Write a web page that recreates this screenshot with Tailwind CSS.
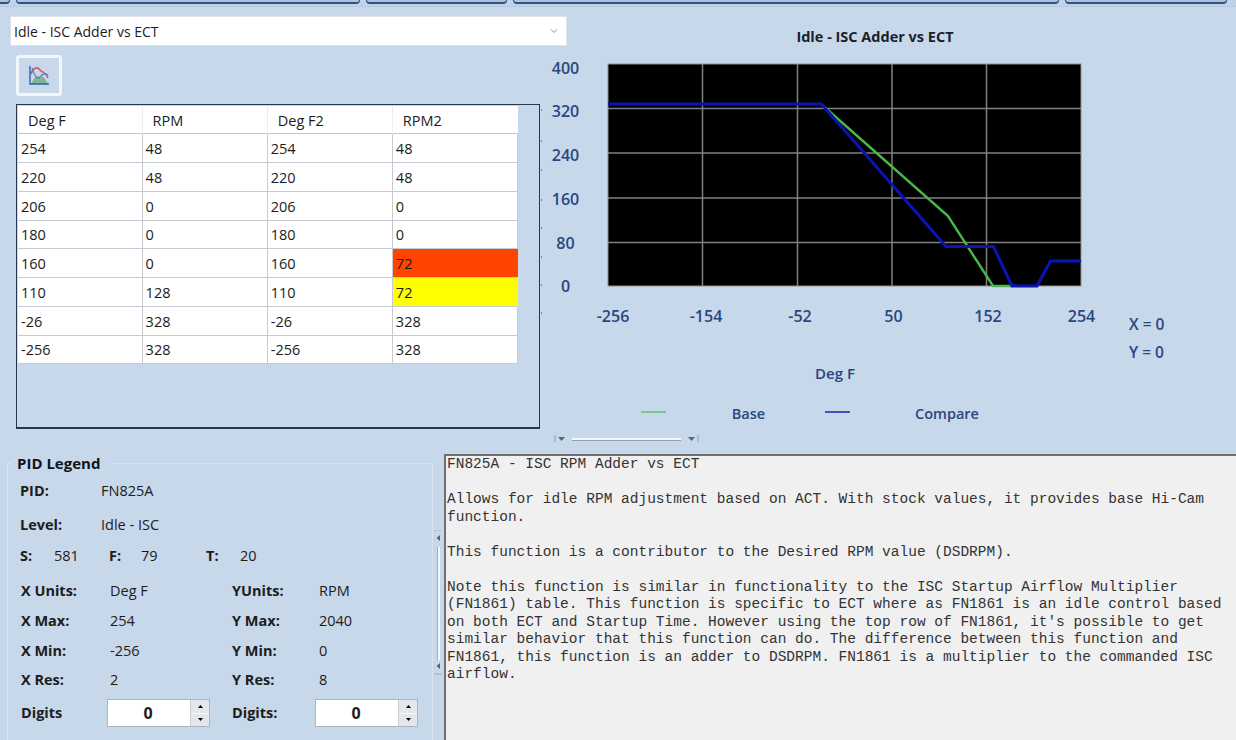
<!DOCTYPE html>
<html lang="en">
<head>
    <meta charset="UTF-8">
    <title>Idle - ISC Adder vs ECT</title>
    <script src="https://cdn.jsdelivr.net/npm/@tailwindcss/browser@4"></script>
</head>
<body class="bg-[#c7d8eb]">
<div class="w-[1236px] h-[740px] overflow-hidden flex flex-col bg-[#c7d8eb] text-[14.5px] text-[#1c1c1c] font-['Open_Sans',sans-serif]">

    <!-- Tab strip, cut off at the top -->
    <div class="h-[7px] flex gap-[6px] border-b border-[#b7c9e2] bg-[#bfd2e8]">
        <div class="w-[10px] h-[4px] bg-[#a9c3e3] border-b-2 border-r border-[#33527f] rounded-br-sm"></div>
        <div class="w-[344px] h-[4px] bg-[#a9c3e3] border-b-2 border-x border-[#33527f] rounded-b-sm"></div>
        <div class="w-[141px] h-[4px] bg-[#a9c3e3] border-b-2 border-x border-[#33527f] rounded-b-sm"></div>
        <div class="w-[546px] h-[4px] bg-[#a9c3e3] border-b-2 border-x border-[#33527f] rounded-b-sm"></div>
        <div class="w-[162px] h-[4px] bg-[#a9c3e3] border-b-2 border-x border-[#33527f] rounded-b-sm"></div>
    </div>

    <!-- Combo box + chart title -->
    <div class="flex h-[39px] pt-[9px]">
        <div class="ml-[10px] w-[557px] h-[30px] bg-white border border-[#dde3ec] flex items-center justify-between pl-[3px] pr-[8px]">
            <span class="text-[14px]">Idle - ISC Adder vs ECT</span>
            <svg width="8" height="6" viewBox="0 0 8 6"><path d="M1 1.5 L4 4.5 L7 1.5" fill="none" stroke="#8a8f96" stroke-width="1"/></svg>
        </div>
        <div class="flex-1 flex justify-center pt-[11px] pr-[53px]">
            <span class="text-[14.5px] font-bold leading-[20px] text-[#1a1f2a]">Idle - ISC Adder vs ECT</span>
        </div>
    </div>

    <!-- Table + chart -->
    <div class="flex h-[408px]">
        <div class="w-[541px] pt-[9px] pl-[16px] shrink-0">
            <button class="w-[46px] h-[41px] border-[3px] border-[#f2f6fb] rounded-[3px] flex items-center justify-center">
                <svg width="20" height="19" viewBox="0 0 20 19">
                    <path d="M2 18 L6 11 C8 9 9 10 11 12 C13 9 15 10 19 18 Z" fill="#7fb58f"/>
                    <path d="M2 8 C4 2 8 0 11 4 C14 7 17 6 19 12" fill="none" stroke="#d9555f" stroke-width="1.6"/>
                    <path d="M3 2 C5 9 8 14 11 11 C13 8 16 7 19 9" fill="none" stroke="#5a7fc4" stroke-width="1.2"/>
                    <path d="M1 0 V18 H20" fill="none" stroke="#2f62ad" stroke-width="1.4"/>
                </svg>
            </button>
            <div class="mt-[8px] w-[524px] h-[325px] border border-[#26384f] border-b-2 pt-[1px] pl-[1px]">
                <table class="table-fixed w-[500px] border-collapse bg-white">
                    <colgroup>
                        <col class="w-[124px]"><col class="w-[125px]"><col class="w-[125px]"><col class="w-[125px]">
                    </colgroup>
                    <thead class="[&_th]:pt-[3px]">
                        <tr class="h-[27px] border-b border-[#bfc5d0]">
                            <th class="font-normal text-left pl-[10px] border-r border-[#eceef2]">Deg F</th>
                            <th class="font-normal text-left pl-[10px] border-r border-[#eceef2]">RPM</th>
                            <th class="font-normal text-left pl-[10px] border-r border-[#eceef2]">Deg F2</th>
                            <th class="font-normal text-left pl-[10px]">RPM2</th>
                        </tr>
                    </thead>
                    <tbody class="[&_td]:pt-[2px]">
                        <tr class="h-[29px] border-b border-[#c5cad3]"><td class="pl-[3px] border-r border-[#c5cad3]">254</td><td class="pl-[3px] border-r border-[#c5cad3]">48</td><td class="pl-[3px] border-r border-[#c5cad3]">254</td><td class="pl-[3px] border-r border-[#c5cad3]">48</td></tr>
                        <tr class="h-[29px] border-b border-[#c5cad3]"><td class="pl-[3px] border-r border-[#c5cad3]">220</td><td class="pl-[3px] border-r border-[#c5cad3]">48</td><td class="pl-[3px] border-r border-[#c5cad3]">220</td><td class="pl-[3px] border-r border-[#c5cad3]">48</td></tr>
                        <tr class="h-[29px] border-b border-[#c5cad3]"><td class="pl-[3px] border-r border-[#c5cad3]">206</td><td class="pl-[3px] border-r border-[#c5cad3]">0</td><td class="pl-[3px] border-r border-[#c5cad3]">206</td><td class="pl-[3px] border-r border-[#c5cad3]">0</td></tr>
                        <tr class="h-[28px] border-b border-[#c5cad3]"><td class="pl-[3px] border-r border-[#c5cad3]">180</td><td class="pl-[3px] border-r border-[#c5cad3]">0</td><td class="pl-[3px] border-r border-[#c5cad3]">180</td><td class="pl-[3px] border-r border-[#c5cad3]">0</td></tr>
                        <tr class="h-[29px] border-b border-[#c5cad3]"><td class="pl-[3px] border-r border-[#c5cad3]">160</td><td class="pl-[3px] border-r border-[#c5cad3]">0</td><td class="pl-[3px] border-r border-[#c5cad3]">160</td><td class="pl-[3px] bg-[#ff4500]">72</td></tr>
                        <tr class="h-[29px] border-b border-[#c5cad3]"><td class="pl-[3px] border-r border-[#c5cad3]">110</td><td class="pl-[3px] border-r border-[#c5cad3]">128</td><td class="pl-[3px] border-r border-[#c5cad3]">110</td><td class="pl-[3px] bg-[#ffff00]">72</td></tr>
                        <tr class="h-[29px] border-b border-[#c5cad3]"><td class="pl-[3px] border-r border-[#c5cad3]">-26</td><td class="pl-[3px] border-r border-[#c5cad3]">328</td><td class="pl-[3px] border-r border-[#c5cad3]">-26</td><td class="pl-[3px] border-r border-[#c5cad3]">328</td></tr>
                        <tr class="h-[28px] border-b border-[#c5cad3]"><td class="pl-[3px] border-r border-[#c5cad3]">-256</td><td class="pl-[3px] border-r border-[#c5cad3]">328</td><td class="pl-[3px] border-r border-[#c5cad3]">-256</td><td class="pl-[3px] border-r border-[#c5cad3]">328</td></tr>
                    </tbody>
                </table>
            </div>
        </div>

        <!-- Chart: viewBox uses page coordinates -->
        <svg class="shrink-0 font-['Open_Sans',sans-serif] font-semibold" width="695" height="408" viewBox="541 46 695 408" fill="#2a4680" font-size="16">
            <path d="M541 110 h1 M541 141 h1 M541 170 h1 M541 200 h1 M541 228 h1 M541 257 h1 M541 285 h1 M541 313 h1" stroke="#26384f" stroke-width="1"/>
            <rect x="608" y="64" width="473" height="222" fill="#000"/>
            <path d="M702.5 64 V286 M797.5 64 V286 M892 64 V286 M986.5 64 V286 M608 108.5 H1081 M608 153 H1081 M608 198 H1081 M608 242.5 H1081" stroke="#808080" stroke-width="1.5" fill="none"/>
            <rect x="608" y="64" width="473" height="222" fill="none" stroke="#8f8f8f" stroke-width="1"/>
            <path d="M821 104 L948 216 L993 286 H1012" fill="none" stroke="#49b849" stroke-width="2.4"/>
            <path d="M608 104 H821.5 L946 246.5 H993.5 L1012 286 H1037 L1050.5 261 H1081" fill="none" stroke="#0a14b4" stroke-width="3"/>
            <g text-anchor="middle">
                <text x="565.5" y="74">400</text>
                <text x="565.5" y="117">320</text>
                <text x="565.5" y="161">240</text>
                <text x="565.5" y="205">160</text>
                <text x="565.5" y="249">80</text>
                <text x="565.5" y="292">0</text>
                <text x="613" y="322">-256</text>
                <text x="706" y="322">-154</text>
                <text x="800" y="322">-52</text>
                <text x="893.5" y="322">50</text>
                <text x="988" y="322">152</text>
                <text x="1081.5" y="322">254</text>
                <text x="835" y="379" font-size="15">Deg F</text>
                <text x="748.5" y="419" font-size="14.5">Base</text>
                <text x="947" y="419" font-size="14.5">Compare</text>
            </g>
            <text x="1129" y="329.5" font-size="15.5">X = 0</text>
            <text x="1129" y="358" font-size="15.5">Y = 0</text>
            <path d="M641 412 H666" stroke="#5cc06a" stroke-width="1.5"/>
            <path d="M825 412 H850" stroke="#1a1fb0" stroke-width="1.5"/>
            <!-- horizontal splitter -->
            <path d="M555 435 V442 M698 435 V442" stroke="#8ea0b6" stroke-width="1"/>
            <path d="M558 437 H565 L561.5 441 Z M688 437 H695 L691.5 441 Z" fill="#5c6672"/>
            <path d="M572 439 H681" stroke="#f4f7fb" stroke-width="2"/>
            <path d="M572 440.5 H681" stroke="#8ea0b6" stroke-width="1"/>
        </svg>
    </div>

    <!-- Legend + description -->
    <div class="flex flex-1 min-h-0">
        <fieldset class="ml-[7px] w-[426px] border border-[#d7e3f0] h-[300px] pl-[12px] shrink-0">
            <legend class="-ml-[9px] pl-[6px] pr-[10px] text-[15px] font-bold leading-[18px] text-[#10151c]">PID Legend</legend>
            <div class="flex h-[24px] items-center mt-[7px]"><b class="w-[81px] font-bold">PID:</b><span>FN825A</span></div>
            <div class="flex h-[24px] items-center mt-[10px]"><b class="w-[81px] font-bold">Level:</b><span>Idle - ISC</span></div>
            <div class="flex h-[24px] items-center mt-[7px]">
                <b class="w-[34px] font-bold">S:</b><span class="w-[55px]">581</span>
                <b class="w-[32px] font-bold">F:</b><span class="w-[65px]">79</span>
                <b class="w-[34px] font-bold">T:</b><span>20</span>
            </div>
            <div class="grid grid-cols-[89px_122px_87px_1fr] pl-[1px]">
                <b class="h-[24px] mt-[11px] flex items-center font-bold">X Units:</b><span class="h-[24px] mt-[11px] flex items-center">Deg F</span><b class="h-[24px] mt-[11px] flex items-center font-bold">YUnits:</b><span class="h-[24px] mt-[11px] flex items-center">RPM</span>
                <b class="h-[24px] mt-[6px] flex items-center font-bold">X Max:</b><span class="h-[24px] mt-[6px] flex items-center">254</span><b class="h-[24px] mt-[6px] flex items-center font-bold">Y Max:</b><span class="h-[24px] mt-[6px] flex items-center">2040</span>
                <b class="h-[24px] mt-[6px] flex items-center font-bold">X Min:</b><span class="h-[24px] mt-[6px] flex items-center">-256</span><b class="h-[24px] mt-[6px] flex items-center font-bold">Y Min:</b><span class="h-[24px] mt-[6px] flex items-center">0</span>
                <b class="h-[24px] mt-[5px] flex items-center font-bold">X Res:</b><span class="h-[24px] mt-[5px] flex items-center">2</span><b class="h-[24px] mt-[5px] flex items-center font-bold">Y Res:</b><span class="h-[24px] mt-[5px] flex items-center">8</span>
                <b class="mt-[7px] h-[28px] flex items-center font-bold">Digits</b>
                <div class="mt-[7px] -ml-[3px] w-[103px] h-[28px] flex border border-[#aab6c4] bg-white">
                    <div class="flex-1 flex items-center justify-center text-[16px] font-bold pr-[2px]">0</div>
                    <div class="w-[19px] flex flex-col bg-[#e3e6ea] border-l border-[#c9ced6] text-[#222]">
                        <div class="flex-1 flex items-center justify-center border-b border-[#f7f8fa]"><svg width="5" height="3" viewBox="0 0 5 3"><path d="M2.5 0 L5 3 H0 Z"/></svg></div>
                        <div class="flex-1 flex items-center justify-center"><svg width="5" height="3" viewBox="0 0 5 3"><path d="M0 0 H5 L2.5 3 Z"/></svg></div>
                    </div>
                </div>
                <b class="mt-[7px] h-[28px] flex items-center font-bold">Digits:</b>
                <div class="mt-[7px] -ml-[4px] w-[103px] h-[28px] flex border border-[#aab6c4] bg-white">
                    <div class="flex-1 flex items-center justify-center text-[16px] font-bold pr-[2px]">0</div>
                    <div class="w-[19px] flex flex-col bg-[#e3e6ea] border-l border-[#c9ced6] text-[#222]">
                        <div class="flex-1 flex items-center justify-center border-b border-[#f7f8fa]"><svg width="5" height="3" viewBox="0 0 5 3"><path d="M2.5 0 L5 3 H0 Z"/></svg></div>
                        <div class="flex-1 flex items-center justify-center"><svg width="5" height="3" viewBox="0 0 5 3"><path d="M0 0 H5 L2.5 3 Z"/></svg></div>
                    </div>
                </div>
            </div>
        </fieldset>

        <!-- Vertical splitter -->
        <div class="w-[11px] shrink-0 pt-[76px] pl-[1px]">
            <svg width="8" height="148" viewBox="0 0 8 148">
                <path d="M0 0 H8 M0 144 H8" stroke="#9fb0c4" stroke-width="1"/>
                <path d="M6 5 V11 L2.5 8 Z M6 133 V139 L2.5 136 Z" fill="#5c6672"/>
                <path d="M5 17 V130" stroke="#f4f7fb" stroke-width="2"/>
                <path d="M3.5 17 V130" stroke="#9fb0c4" stroke-width="1"/>
            </svg>
        </div>

        <div class="flex-1 bg-[#f0f0f0] border-t-2 border-l-2 border-[#6f6f6f] pl-[1px] font-['Liberation_Mono',monospace] text-[14.5px] leading-[17.5px] whitespace-pre text-[#333]">FN825A - ISC RPM Adder vs ECT

Allows for idle RPM adjustment based on ACT. With stock values, it provides base Hi-Cam
function.

This function is a contributor to the Desired RPM value (DSDRPM).

Note this function is similar in functionality to the ISC Startup Airflow Multiplier
(FN1861) table. This function is specific to ECT where as FN1861 is an idle control based
on both ECT and Startup Time. However using the top row of FN1861, it's possible to get
similar behavior that this function can do. The difference between this function and
FN1861, this function is an adder to DSDRPM. FN1861 is a multiplier to the commanded ISC
airflow.</div>
    </div>
</div>
</body>
</html>
